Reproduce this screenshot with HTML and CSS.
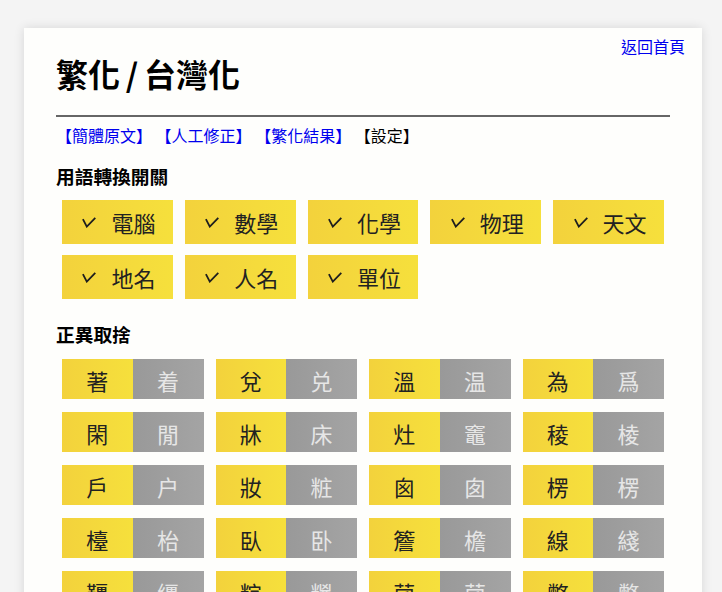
FILE: index.html
```html
<!DOCTYPE html>
<html lang="zh-Hant">
<head>
<meta charset="utf-8">
<title>繁化 / 台灣化</title>
<link rel="stylesheet" href="styles.css">
</head>
<body>
<div class="card">
  <a class="home" href="#">返回首頁</a>
  <h1 class="title">繁化 / 台灣化</h1>
  <hr class="rule">
  <nav class="tabs">
    <a href="#">【簡體原文】</a>
    <a href="#">【人工修正】</a>
    <a href="#">【繁化結果】</a>
    <span>【設定】</span>
  </nav>
  <h3 class="section">用語轉換開關</h3>
  <div class="toggles">
    <div class="toggle"><svg class="check" viewBox="0 0 14 11"><polyline points="0.9,2.2 4.8,9.6 13.3,0.9"/></svg>電腦</div>
    <div class="toggle"><svg class="check" viewBox="0 0 14 11"><polyline points="0.9,2.2 4.8,9.6 13.3,0.9"/></svg>數學</div>
    <div class="toggle"><svg class="check" viewBox="0 0 14 11"><polyline points="0.9,2.2 4.8,9.6 13.3,0.9"/></svg>化學</div>
    <div class="toggle"><svg class="check" viewBox="0 0 14 11"><polyline points="0.9,2.2 4.8,9.6 13.3,0.9"/></svg>物理</div>
    <div class="toggle"><svg class="check" viewBox="0 0 14 11"><polyline points="0.9,2.2 4.8,9.6 13.3,0.9"/></svg>天文</div>
    <div class="toggle"><svg class="check" viewBox="0 0 14 11"><polyline points="0.9,2.2 4.8,9.6 13.3,0.9"/></svg>地名</div>
    <div class="toggle"><svg class="check" viewBox="0 0 14 11"><polyline points="0.9,2.2 4.8,9.6 13.3,0.9"/></svg>人名</div>
    <div class="toggle"><svg class="check" viewBox="0 0 14 11"><polyline points="0.9,2.2 4.8,9.6 13.3,0.9"/></svg>單位</div>
  </div>
  <h3 class="section section2">正異取捨</h3>
  <div class="pairs">
    <div class="pair"><span class="on">著</span><span class="off">着</span></div>
    <div class="pair"><span class="on">兌</span><span class="off">兑</span></div>
    <div class="pair"><span class="on">溫</span><span class="off">温</span></div>
    <div class="pair"><span class="on">為</span><span class="off">爲</span></div>
    <div class="pair"><span class="on">閑</span><span class="off">閒</span></div>
    <div class="pair"><span class="on">牀</span><span class="off">床</span></div>
    <div class="pair"><span class="on">灶</span><span class="off">竈</span></div>
    <div class="pair"><span class="on">稜</span><span class="off">棱</span></div>
    <div class="pair"><span class="on">戶</span><span class="off">户</span></div>
    <div class="pair"><span class="on">妝</span><span class="off">粧</span></div>
    <div class="pair"><span class="on">囪</span><span class="off">囱</span></div>
    <div class="pair"><span class="on">楞</span><span class="off">楞</span></div>
    <div class="pair"><span class="on">檯</span><span class="off">枱</span></div>
    <div class="pair"><span class="on">臥</span><span class="off">卧</span></div>
    <div class="pair"><span class="on">簷</span><span class="off">檐</span></div>
    <div class="pair"><span class="on">線</span><span class="off">綫</span></div>
    <div class="pair"><span class="on">韁</span><span class="off">繮</span></div>
    <div class="pair"><span class="on">粽</span><span class="off">糉</span></div>
    <div class="pair"><span class="on">菌</span><span class="off">菌</span></div>
    <div class="pair"><span class="on">弊</span><span class="off">獘</span></div>
  </div>
</div>
</body>
</html>
```
FILE: styles.css
```css
html, body {
  margin: 0;
  padding: 0;
}
body {
  background: #f4f4f4;
  font-family: "Noto Sans CJK TC", "Noto Sans", sans-serif;
  color: #000;
}
.card {
  position: relative;
  width: 678px;
  box-sizing: border-box;
  margin: 28px 0 0 24px;
  padding: 21px 32px 40px;
  background: #fefefc;
  box-shadow: 0 0 10px rgba(0, 0, 0, 0.12);
  min-height: 600px;
}
.home {
  position: absolute;
  top: 6px;
  right: 17px;
  font-size: 16px;
  line-height: 24px;
  color: #0000ee;
  text-decoration: none;
}
.title {
  margin: 0;
  font-size: 32px;
  line-height: 48px;
  font-weight: 700;
  word-spacing: -1.5px;
}
.rule {
  margin: 18px 0 0;
  border: 0;
  height: 2px;
  background: #666;
}
.tabs {
  margin-top: 6px;
  font-size: 16px;
  line-height: 24px;
}
.tabs a {
  color: #0000ee;
  text-decoration: none;
}
.section {
  margin: 16px 0 0;
  font-size: 18.72px;
  line-height: 26px;
  font-weight: 700;
}
.toggles {
  display: flex;
  flex-wrap: wrap;
  margin-top: 5px;
}
.toggle {
  box-sizing: border-box;
  width: calc(20% - 12px);
  margin: 5.5px 6px;
  height: 44px;
  padding-left: 3px;
  display: flex;
  align-items: center;
  justify-content: center;
  font-size: 22px;
  color: #222;
  background: linear-gradient(to right, #f3d23c, #f6e03c);
}
.check {
  width: 14px;
  height: 11px;
  margin: 2px 15px 0 0;
  fill: none;
  stroke: #1e1e1e;
  stroke-width: 1.8;
  stroke-linejoin: miter;
}
.section2 {
  margin-top: 17px;
}
.pairs {
  display: flex;
  flex-wrap: wrap;
  margin-top: 5px;
}
.pair {
  width: calc(25% - 12px);
  margin: 6.5px 6px;
  height: 40px;
  display: flex;
}
.pair span {
  flex: 1;
  display: flex;
  align-items: center;
  justify-content: center;
  font-size: 22px;
  padding-top: 2px;
}
.on {
  color: #222;
  background: linear-gradient(to right, #f3d23c, #f6e03c);
}
.off {
  color: #e6e6e6;
  background: linear-gradient(to right, #999999, #a4a4a4);
}
```
